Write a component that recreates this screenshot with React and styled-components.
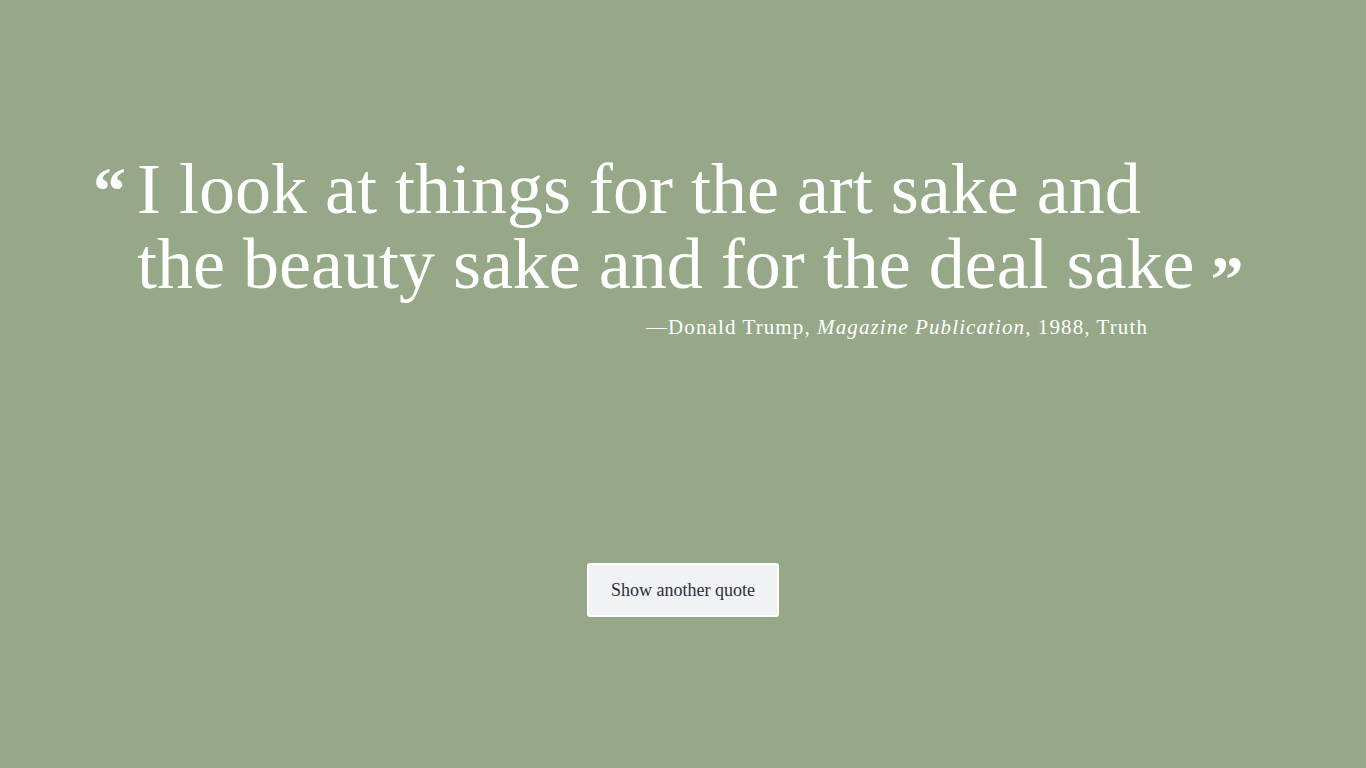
import React from 'react';
import styled, { createGlobalStyle } from 'styled-components';

const Global = createGlobalStyle`
  html, body { margin: 0; padding: 0; background: #96a888; }
  body { font-family: "Liberation Serif", "DejaVu Serif", serif; color: #fff; }
  * { box-sizing: border-box; }
`;

const Page = styled.main`
  min-height: 768px;
  display: flex;
  flex-direction: column;
  padding-top: 152px;
`;

const Quote = styled.figure`
  margin: 0 0 0 93px;
  width: 1160px;
`;

const Text = styled.blockquote`
  margin: 0;
  padding-left: 44px;
  text-indent: -44px;
  font-size: 72px;
  line-height: 75px;
  font-weight: 400;
  white-space: nowrap;
  color: #fff;
`;

const Mark = styled.span`
  display: inline-block;
  text-indent: 0;
  width: ${p => (p.$open ? '44px' : 'auto')};
  margin-left: ${p => (p.$open ? '0' : '16px')};
  font-weight: 700;
  font-size: 66px;
  vertical-align: ${p => (p.$open ? '0' : '-0.2em')};
  line-height: 0;
`;

const Cite = styled.figcaption`
  margin-top: 13px;
  width: 1055px;
  text-align: right;
  font-size: 21px;
  line-height: 24px;
  letter-spacing: 1.1px;
  color: #fff;
  em { font-style: italic; }
`;

const Actions = styled.div`
  display: flex;
  justify-content: center;
  margin-top: 224px;
`;

const Button = styled.button`
  width: 192px;
  height: 54px;
  background: #f1f2f4;
  border: 2px solid #fff;
  border-radius: 3px;
  font-family: "Liberation Serif", "DejaVu Serif", serif;
  font-size: 18px;
  color: #2b2f3a;
  cursor: pointer;
`;

export default function App() {
  return (
    <>
      <Global />
      <Page>
        <Quote>
          <Text>
            <Mark $open>“</Mark>I look at things for the art sake and
            <br />
            the beauty sake and for the deal sake<Mark>”</Mark>
          </Text>
          <Cite>
            —Donald Trump, <em>Magazine Publication</em>, 1988, Truth
          </Cite>
        </Quote>
        <Actions>
          <Button type="button">Show another quote</Button>
        </Actions>
      </Page>
    </>
  );
}
